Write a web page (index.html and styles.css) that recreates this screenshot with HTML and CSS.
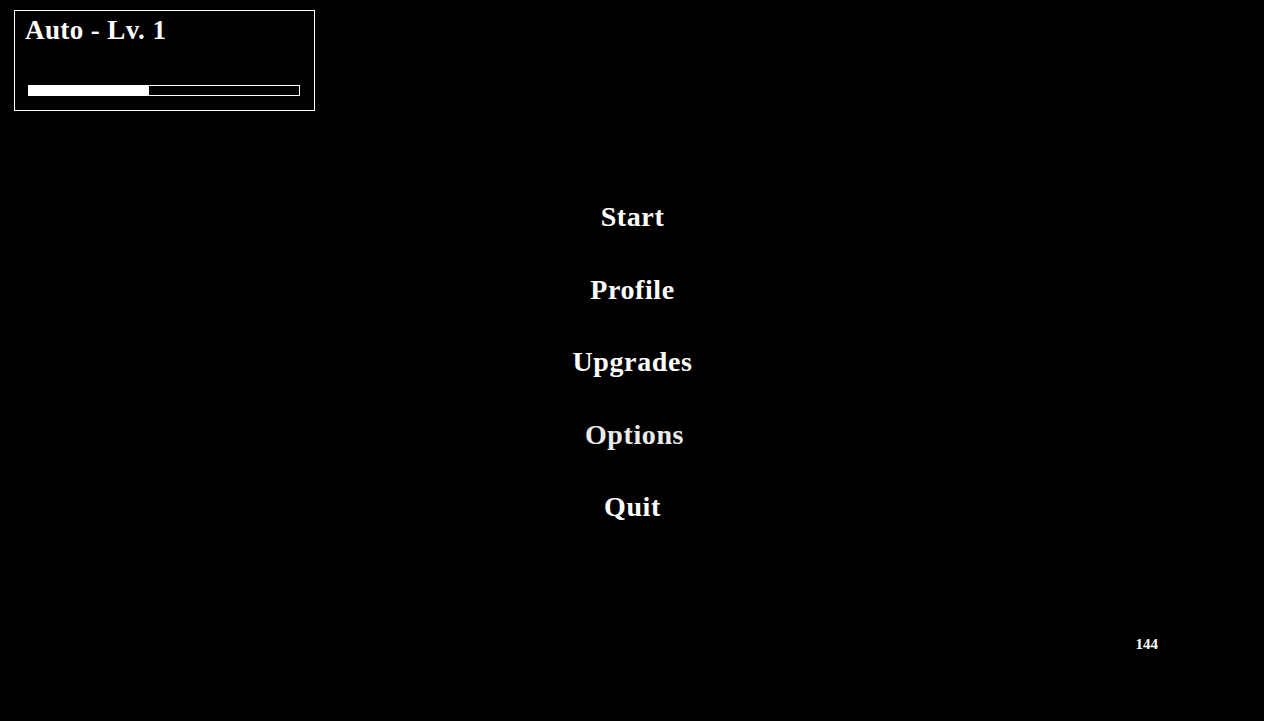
FILE: index.html
```html
<!DOCTYPE html>
<html>
<head>
<meta charset="utf-8">
<link rel="stylesheet" href="styles.css">
</head>
<body>
<div class="panel">
  <div class="title">Auto - Lv. 1</div>
  <div class="bar"><div class="fill" style="width:44.4%"></div></div>
</div>
<nav class="menu">
  <div class="item">Start</div>
  <div class="item">Profile</div>
  <div class="item">Upgrades</div>
  <div class="item item-hover">Options</div>
  <div class="item">Quit</div>
</nav>
<div class="fps">144</div>
</body>
</html>
```
FILE: styles.css
```css
html, body {
  margin: 0;
  padding: 0;
  background: #000;
  color: #fff;
  font-family: "Liberation Serif", "Times New Roman", serif;
  font-weight: bold;
  width: 1264px;
  height: 721px;
  overflow: hidden;
  position: relative;
}
.panel {
  box-sizing: border-box;
  margin: 10px 0 0 14px;
  width: 301px;
  height: 101px;
  border: 1px solid #fff;
  padding: 2px 0 0 0;
}
.title {
  font-size: 27px;
  line-height: 34px;
  padding-left: 10px;
  letter-spacing: 0.4px;
}
.bar {
  box-sizing: border-box;
  margin: 38px 0 0 13px;
  width: 272px;
  height: 11px;
  border: 1px solid #fff;
}
.fill {
  height: 100%;
  background: #fff;
}
.menu {
  margin-top: 70px;
  display: flex;
  flex-direction: column;
  align-items: center;
}
.item {
  font-size: 28px;
  line-height: 72.5px;
  padding-left: 1px;
  letter-spacing: 0.6px;
}
.item-hover {
  color: #ececec;
  transform: translateX(2px);
}
.fps {
  position: absolute;
  right: 106px;
  top: 634px;
  font-size: 15px;
  line-height: 20px;
}
```
